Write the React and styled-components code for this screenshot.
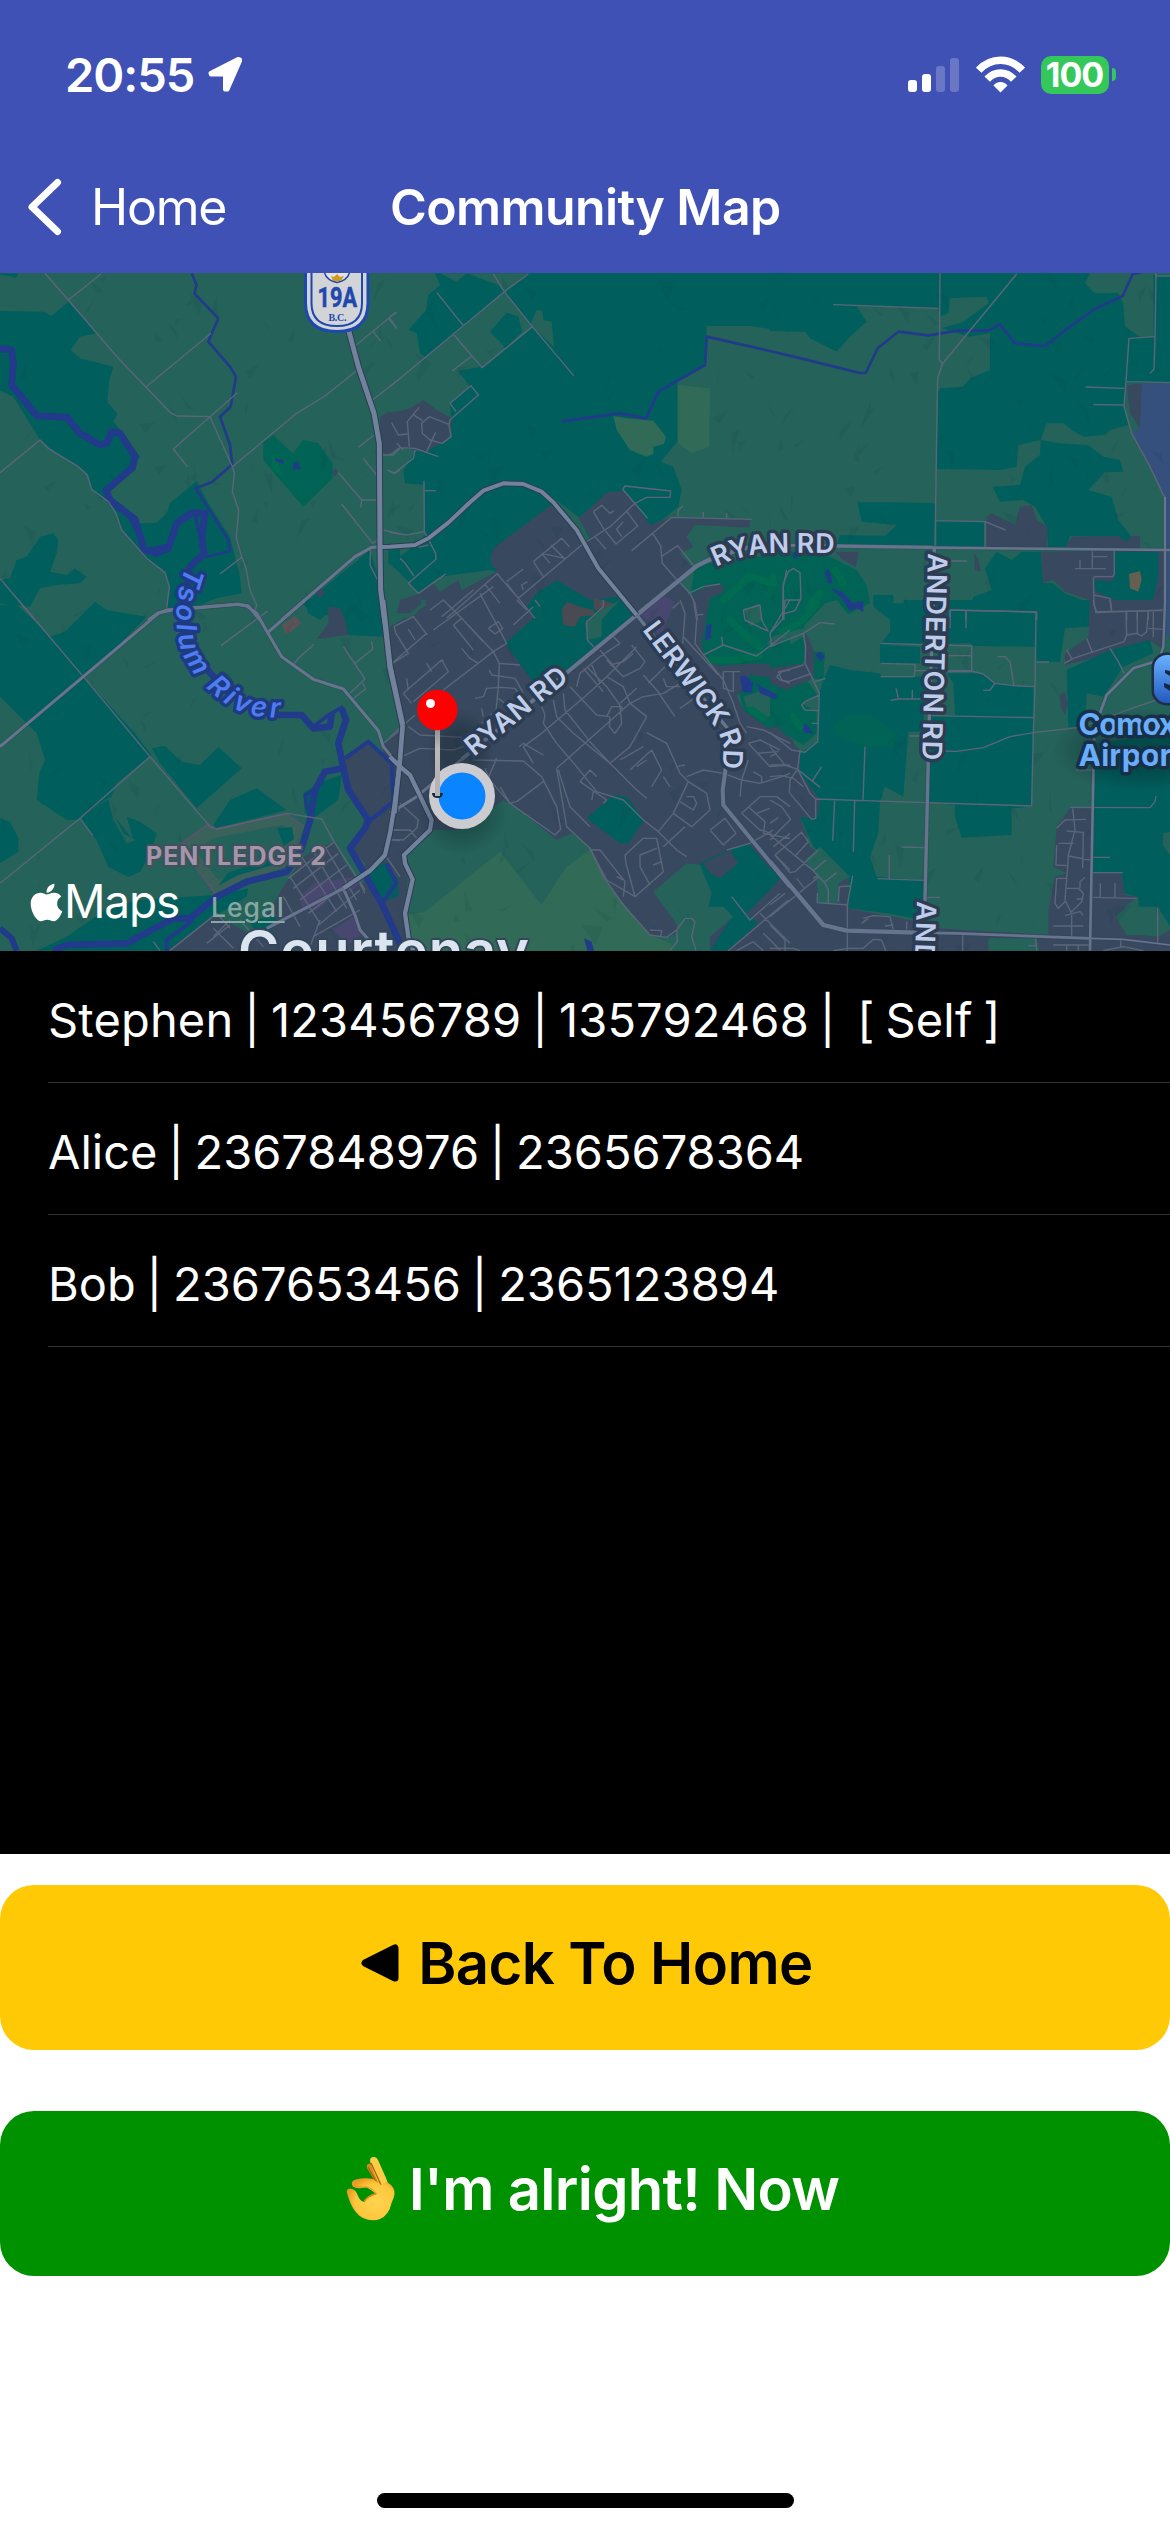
import React from "react";
import styled, { createGlobalStyle } from "styled-components";
import { FaApple } from "react-icons/fa";

const GlobalStyle = createGlobalStyle`
  *, *::before, *::after { box-sizing: border-box; }
  html, body { margin: 0; padding: 0; background: #fff; }
  body { font-family: Inter, "Liberation Sans", sans-serif; }
`;

const Screen = styled.main`
  width: 1170px;
  height: 2532px;
  display: flex;
  flex-direction: column;
  background: #fff;
  overflow: hidden;
`;

const Header = styled.header`
  height: 273px;
  flex: none;
  display: flex;
  flex-direction: column;
  background: #3f51b5;
  color: #fff;
`;

const StatusBar = styled.div`
  height: 141px;
  padding: 8px 54px 0 65px;
  display: flex;
  align-items: center;
  justify-content: space-between;
`;

const StatusGroup = styled.div`
  display: flex;
  align-items: center;
  gap: ${(p) => p.$gap}px;
`;

const Clock = styled.span`
  width: 129px;
  white-space: nowrap;
  font-size: 47px;
  line-height: 56px;
  font-weight: 600;
  letter-spacing: -1px;
`;

const Signal = styled.div`
  height: 34px;
  display: flex;
  align-items: flex-end;
  gap: 5px;
  margin-right: 17px;
`;

const SignalBar = styled.i`
  width: 9px;
  height: ${(p) => p.$h}px;
  border-radius: 3px;
  background: #fff;
  opacity: ${(p) => (p.$on ? 1 : 0.22)};
`;

const Battery = styled.div`
  display: flex;
  align-items: center;
  gap: 3px;
`;

const BatteryBody = styled.div`
  width: 68px;
  height: 38px;
  border-radius: 10px;
  background: #34c759;
  display: flex;
  align-items: center;
  justify-content: center;
  font-size: 34px;
  line-height: 38px;
  font-weight: 700;
  letter-spacing: -1px;
  padding-right: 1px;
`;

const BatteryNub = styled.i`
  width: 4px;
  height: 13px;
  border-radius: 0 5px 5px 0;
  background: #34c759;
`;

const NavBar = styled.nav`
  height: 132px;
  display: grid;
  grid-template-columns: 390px 1fr 390px;
  align-items: center;
`;

const BackLink = styled.div`
  display: flex;
  align-items: center;
  padding-left: 27px;
  gap: 27px;
  font-size: 50px;
  line-height: 60px;
  letter-spacing: -1.2px;
`;

const Title = styled.h1`
  margin: 0;
  font-size: 50px;
  line-height: 60px;
  font-weight: 600;
  letter-spacing: -0.6px;
  white-space: nowrap;
`;

const MapPane = styled.section`
  position: relative;
  height: 678px;
  flex: none;
  overflow: hidden;
  background: #25635a;
  svg { display: block; }
`;

const MapCredit = styled.div`
  position: absolute;
  left: 25px;
  bottom: 27px;
  display: flex;
  align-items: flex-end;
  color: #fff;
`;

const CreditName = styled.span`
  width: 147px;
  margin-left: -4px;
  font-size: 46px;
  line-height: 46px;
  letter-spacing: -1.2px;
`;

const LegalLink = styled.span`
  font-size: 26.5px;
  line-height: 34px;
  font-weight: 500;
  letter-spacing: 1px;
  color: #87a8a2;
  text-decoration: underline;
  text-decoration-thickness: 2px;
  text-underline-offset: 4px;
`;

const ContactList = styled.ul`
  margin: 0;
  padding: 0 0 0 48px;
  height: 903px;
  flex: none;
  list-style: none;
  background: #000;
  color: #fff;
`;

const Contact = styled.li`
  height: 132px;
  padding-top: 6px;
  display: flex;
  align-items: center;
  border-bottom: 1px solid #333335;
  font-size: 47px;
  line-height: 60px;
  letter-spacing: ${(p) => p.$track}px;
  word-spacing: -2.5px;
  white-space: pre;
`;

const Actions = styled.div`
  flex: 1;
  display: flex;
  flex-direction: column;
  gap: 61px;
  padding-top: 31px;
`;

const ActionButton = styled.button`
  height: 165px;
  flex: none;
  border: 0;
  border-radius: 34px;
  display: flex;
  align-items: center;
  justify-content: center;
  gap: ${(p) => p.$gap}px;
  padding: 0 0 10px ${(p) => p.$shift}px;
  background: ${(p) => p.$bg};
  color: ${(p) => p.$fg};
  font-family: inherit;
  font-size: 58px;
  line-height: 70px;
  font-weight: 600;
  letter-spacing: ${(p) => p.$track}px;
  white-space: nowrap;
`;

const HomeIndicator = styled.div`
  width: 417px;
  height: 15px;
  margin: 0 auto 24px;
  flex: none;
  border-radius: 8px;
  background: #000;
`;

/* ---------- map data: six sheets, three units to the pixel ---------- */

const SHEETS = {
  A: [0, 270], B: [390, 270], C: [770, 270],
  D: [0, 600], E: [390, 600], F: [770, 600],
};

const LAND = {
  field: "#25635a", forest: "#005f5d", urban: "#38495f", olive: "#316a57",
  golf: "#006355", bright: "#006b50", airport: "#35507c", purple: "#48476f",
  brown: "#4a4a53", red: "#5b5357", tan: "#655f52", water: "#213a8a",
};

const AREAS = [
  ["A", "forest", "M0 122L130 125L155 137L205 95L290 190L240 200L212 240L240 265L340 290L328 330L322 395L352 432L340 455L370 490L420 560L380 610L320 660L305 690L275 658L262 610L235 590L145 535L120 510L40 380L0 362Z"],
  ["A", "forest", "M305 675L320 665L380 730L420 760L470 758L500 730L510 700L590 633L625 700L690 800L720 920L725 970L650 985L600 1005L500 1015L508 950L495 908L440 870L365 780L348 730Z"],
  ["A", "forest", "M0 930L30 925L50 870L80 860L120 800L160 790L175 810L170 850L150 905L200 915L225 895L260 920L240 940L170 945L120 955L90 1010L40 1005L0 1000Z"],
  ["A", "forest", "M0 10L55 10L48 25L30 18L0 14Z"],
  ["D", "forest", "M0 15L45 10L90 50L150 110L195 95L285 5L320 30L440 50L300 190L250 230L300 285L405 400L455 465L350 550L330 600L345 650L400 720L380 650L420 665L470 700L450 760L420 815L385 830L325 800L290 720L240 660L200 660L110 600L118 520L135 480L110 400L60 350L0 290Z"],
  ["D", "field", "M240 655L330 590L345 650L370 700L410 722L380 740L300 735Z"],
  ["D", "forest", "M240 655L325 598L340 660L380 730L470 700L450 760L420 815L385 830L325 800L290 720Z"],
  ["D", "forest", "M0 655L30 665L55 715L55 755L0 790Z"],
  ["D", "forest", "M455 445L495 437L545 485L600 495L655 440L725 505L590 625L480 490Z"],
  ["D", "forest", "M640 675L690 600L770 565L860 630L650 685Z"],
  ["D", "forest", "M110 1052L200 1010L330 920L420 900L560 890L650 885L745 865L740 890L660 940L560 1052Z"],
  ["D", "forest", "M960 545L1025 525L1015 600L940 655L915 640L910 580Z"],
  ["D", "forest", "M815 685L870 680L880 705L850 735Z"],
  ["D", "forest", "M650 870L680 830L870 760L880 790L720 850Z"],
  ["A", "golf", "M790 515L820 495L878 550L910 510L955 520L998 580L998 625L910 710L845 635L790 570Z"],
  ["A", "bright", "M815 550L830 555L848 625L815 595Z"],
  ["A", "water", "M825 563L850 572L850 582L825 573Z"],
  ["A", "water", "M880 582L890 573L905 597L880 598Z"],
  ["A", "urban", "M1140 440L1165 425L1200 425L1200 530L1155 555L1142 530Z"],
  ["A", "urban", "M995 605L1005 595L1015 604L1005 620Z"],
  ["A", "forest", "M915 1000L1110 840L1140 940L1145 1050L1050 1050L1000 1010L960 1050L925 1030Z"],
  ["A", "forest", "M1165 840L1200 835L1200 905L1165 880Z"],
  ["A", "urban", "M945 965L965 955L975 970L960 985Z"],
  ["D", "forest", "M905 10L920 0L1145 0L1148 110L1040 105L1020 40L950 50Z"],
  ["D", "urban", "M985 20L1020 25L1035 60L1045 105L950 118L985 70Z"],
  ["D", "red", "M845 75L885 48L905 70L860 105Z"],
  ["B", "forest", "M135 10L150 45L115 75L108 120L55 180L80 190L90 250L105 262L192 193L245 258L270 290L205 303L240 350L180 400L182 440L185 500L155 520L75 545L40 600L45 640L102 645L105 795L70 830L0 880L60 940L85 970L150 920L300 900L500 960L750 900L780 780L865 710L875 660L850 590L812 575L862 515L862 335L945 285L950 168L1080 168L1200 185L1200 10Z"],
  ["B", "field", "M192 195L343 65L427 170L276 293Z"],
  ["B", "field", "M230 10L415 10L343 65L325 45Z"],
  ["B", "field", "M150 10L230 10L200 35Z"],
  ["B", "forest", "M300 185L350 128L385 140L397 185L345 235L330 215Z"],
  ["B", "field", "M420 165L440 120L457 122L460 150L485 155L492 230L427 172Z"],
  ["B", "field", "M490 683L570 745L600 810L580 810L540 740Z"],
  ["B", "olive", "M670 438L710 445L790 452L828 500L822 522L790 530L790 552L770 560L720 540L680 480Z"],
  ["B", "olive", "M865 345L960 355L958 530L905 550L865 520Z"],
  ["C", "forest", "M0 10L960 10L945 40L975 70L1045 68L1060 100L1065 170L1110 200L1150 200L1150 15L1200 15L1200 340L1070 340L1062 410L1075 465L1020 480L1005 495L940 500L905 480L880 460L830 460L812 510L745 525L740 590L690 600L500 597L503 365L510 355L580 350L600 325L660 300L660 190L600 200L515 175L580 155L655 100L650 80L540 85L535 130L508 140L505 115L260 108L290 155L240 200L200 245L120 205L105 185L0 183Z"],
  ["C", "forest", "M812 510L870 520L955 525L1000 560L1050 570L1060 605L1005 607L955 660L1025 680L1045 750L1085 800L1070 815L1045 800L900 798L890 832L835 832L830 770L795 710L760 690L690 695L668 650L750 645L765 590L810 555Z"],
  ["C", "forest", "M262 697L385 697L495 700L495 828L200 825L210 795L345 797L380 765L275 755Z"],
  ["C", "forest", "M500 752L645 755L645 830L500 830Z"],
  ["C", "urban", "M650 740L665 730L735 765L750 710L785 705L800 750L832 770L832 832L650 832Z"],
  ["C", "urban", "M885 832L905 800L1045 798L1070 815L1085 798L1110 798L1110 835Z"],
  ["C", "urban", "M1070 345L1116 340L1110 475L1080 430Z"],
  ["C", "airport", "M1116 340L1200 340L1200 1100L1188 1100L1186 685L1140 590L1086 485L1110 475Z"],
  ["C", "forest", "M310 975L370 975L370 1000L460 1000L470 1050L360 1050L310 1010Z"],
  ["C", "forest", "M680 845L725 870L755 845L812 845L820 940L850 940L885 970L960 1000L960 1050L590 1050L610 980L665 960L645 895Z"],
  ["C", "urban", "M812 845L1185 840L1185 1120L960 1100L958 990L885 965L850 930L820 940Z"],
  ["C", "forest", "M1035 845L1165 845L1165 920L1150 990L1060 1000L1000 975L975 960L975 930L1025 935L1035 920Z"],
  ["C", "tan", "M1077 912L1110 903L1115 930L1105 965L1080 955Z"],
  ["C", "urban", "M612 850L625 865L632 905L615 900Z"],
  ["B", "urban", "M0 430L60 415L100 390L140 420L185 445L182 500L155 520L105 545L20 530L0 555Z"],
  ["B", "urban", "M300 870L310 835L490 700L545 765L590 815L600 800L565 745L655 665L705 663L780 765L845 740L1080 748L1078 773L915 765L890 800L910 830L870 850L905 890L870 940L900 975L955 965L958 1000L935 1120L1010 1210L1060 1320L1210 1410L1210 2045L0 2045L0 1070L110 1005L85 975L130 940L150 965L205 930L215 960L320 905Z"],
  ["D", "urban", "M1150 430L1200 385L1200 1052L500 1052L650 945L745 1000L790 960L850 860L910 770L1000 725L1030 780L1090 870L1095 790L1050 750L1100 670L1040 560L1030 485L1105 420L1150 470Z"],
  ["D", "forest", "M745 960L830 950L820 985L770 1000Z"],
  ["D", "forest", "M1090 830L1155 785L1195 840L1195 890L1145 905Z"],
  ["D", "purple", "M900 890L940 850L1060 830L1090 850L1020 890L940 935L905 920Z"],
  ["D", "purple", "M1000 990L1060 950L1090 1000L1040 1035Z"],
  ["D", "urban", "M960 940L990 880L1010 870L1030 900Z"],
  ["E", "field", "M0 240L35 380L0 405Z"],
  ["E", "field", "M0 0L110 0L70 50L0 60Z"],
  ["E", "urban", "M30 0L90 -20L95 10L60 40L20 40Z"],
  ["E", "field", "M45 950L55 800L40 770L125 690L210 690L340 600L400 640L500 720L545 700L600 740L640 830L700 920L780 1005L830 1015L860 1000L880 960L885 1052L60 1052Z"],
  ["E", "olive", "M45 945L105 935L330 755L455 915L530 800L600 750L650 850L780 1005L840 1030L860 1052L60 1052Z"],
  ["E", "water", "M582 1015L605 1025L612 1052L592 1052Z"],
  ["E", "forest", "M345 130L435 50L410 20L440 -20L500 -60L600 0L680 -10L740 45L525 215L425 240Z"],
  ["E", "brown", "M515 30L530 5L570 20L612 30L612 45L570 50L555 80L520 75Z"],
  ["E", "brown", "M610 -5L655 5L680 15L640 35L612 28Z"],
  ["E", "field", "M585 70L635 30L690 0L665 25L635 60L635 110L595 120Z"],
  ["E", "purple", "M745 40L820 -15L855 5L840 40L810 110L780 65Z"],
  ["E", "forest", "M590 655L670 585L710 590L762 660L715 730L690 730Z"],
  ["E", "forest", "M930 790L1025 745L1075 730L1170 840L1070 940L1105 970L1010 1052L960 1052L1025 950L955 920Z"],
  ["E", "field", "M790 875L890 790L930 795L965 880L955 920L1000 920L1030 950L960 1010L960 1052L840 1052L860 1000L862 975Z"],
  ["E", "urban", "M940 790L1020 750L1045 790L990 835L960 820Z"],
  ["B", "golf", "M915 890L1000 870L1200 850L1200 1400L1170 1400L1060 1320L1045 1260L1010 1200L960 1170L940 1150L935 1120L960 985L900 975Z"],
  ["B", "urban", "M900 975L960 945L1000 945L1000 968L958 985L935 1110L900 1080Z"],
  ["E", "urban", "M960 205L1010 195L1100 190L1200 195L1200 250L1130 230L1080 225L1050 280L1020 300Z"],
  ["E", "field", "M1060 290L1120 270L1180 340L1130 350L1070 320Z"],
  ["E", "field", "M1130 130L1200 60L1200 110L1150 140Z"],
  ["E", "field", "M1062 30L1105 10L1120 60L1080 80Z"],
  ["C", "golf", "M0 845L150 845L260 900L290 945L300 1000L200 1050L0 1100Z"],
  ["C", "urban", "M195 845L265 845L258 892L220 870Z"],
  ["C", "field", "M165 1000L200 990L240 1040L280 1030L300 1050L130 1100L100 1070Z"],
  ["F", "forest", "M160 240L180 195L240 210L330 220L335 230L465 230L460 395L415 395L400 590L345 560L330 605L325 700L300 770L320 830L460 840L460 960L350 940L235 925L235 830L130 740L90 650L140 655L150 600L90 520L90 460L140 430L148 280Z"],
  ["F", "forest", "M360 60L410 45L400 0L960 0L958 80L885 85L870 185L800 185L797 140L610 138L600 130L330 135L360 95Z"],
  ["F", "forest", "M330 135L450 140L450 190L330 190Z"],
  ["F", "forest", "M530 220L640 220L680 250L730 255L790 258L792 395L785 620L555 615L475 605L480 350L555 345L550 250Z"],
  ["F", "forest", "M555 615L785 620L725 625L725 705L575 713L555 650Z"],
  ["F", "urban", "M960 0L1180 0L1180 150L1140 120L1030 160L885 195L885 160L955 110Z"],
  ["F", "forest", "M890 210L1020 150L1140 120L1150 160L1060 200L1000 290L950 280L945 380L895 380Z"],
  ["F", "forest", "M975 430L1200 400L1200 980L1165 920L1105 920L1105 890L1060 880L1055 820L968 820Z"],
  ["F", "field", "M1180 700L1200 695L1200 765L1178 735Z"],
  ["F", "urban", "M870 285L885 275L893 310L885 345L872 320Z"],
  ["F", "urban", "M900 625L968 625L968 820L1055 820L1065 885L1105 890L1065 920L1070 1000L1165 1010L1200 990L1200 1052L505 1052L505 985L835 1005L835 930L855 830L890 820L850 800L860 680Z"],
  ["F", "field", "M1037 950L1070 920L1165 925L1165 1005L1070 1005Z"],
  ["F", "field", "M655 1015L800 1015L808 1052L655 1052Z"],
  ["F", "urban", "M0 380L30 380L70 430L90 450L90 520L150 600L140 655L90 650L120 740L235 830L235 925L420 960L505 985L505 1052L0 1052Z"],
  ["F", "field", "M105 780L150 740L240 830L205 850L205 910L145 910L140 830Z"],
  ["F", "forest", "M0 800L32 835L0 870Z"],
  ["F", "golf", "M0 170L100 110L105 180L60 235L110 240L145 290L95 310L140 335L140 400L100 435L40 400L0 350Z"],
  ["F", "urban", "M0 205L100 190L130 235L50 270L0 250Z"],
  ["F", "urban", "M105 95L132 150L132 235L105 190Z"],
  ["F", "golf", "M132 155L165 155L160 240L132 235Z"],
  ["F", "golf", "M190 380L230 345L300 345L380 400L370 440L290 440L200 410Z"],
  ["C", "water", "M163 905L175 898L187 940L175 940Z"],
  ["C", "water", "M182 955L215 965L250 1000L280 992L280 1027L262 1015L240 1022L215 985Z"],
  ["C", "water", "M70 850L82 845L82 865L68 862Z"],
  ["E", "water", "M950 75L965 72L962 115L945 122Z"],
  ["E", "water", "M1050 230L1065 225L1090 250L1085 278L1058 275Z"],
  ["E", "water", "M1102 252L1160 285L1155 297L1110 280Z"],
  ["F", "water", "M138 165L150 155L163 170L150 185Z"],
  ["F", "water", "M92 375L110 373L130 400L105 398Z"],
  ["F", "water", "M0 275L22 288L15 298L0 292Z"],
];

const FAIRWAYS = [
  ["E", "M1020 60L1060 100L1110 140"], ["E", "M960 180L1040 180L1110 165"],
  ["E", "M1085 330L1120 355"], ["B", "M1000 990L1080 920L1150 940"],
  ["C", "M10 920L0 970"], ["C", "M150 970L120 1015"], ["F", "M140 10L100 60L40 95"],
  ["F", "M130 0L115 30"], ["F", "M70 350L90 380"], ["C", "M195 900L220 940"],
];

const RIVERS = [
  ["A", 21, "M0 236L35 240L40 280L35 345L110 437L200 442L240 490L300 525L322 518L335 485L360 490L405 560L398 592L318 662L330 690L405 748L432 838L470 850L505 835L530 760L575 728L615 730L605 800L612 850L570 890L560 960"],
  ["A", 9, "M385 735L425 815L440 840L500 825M583 725L600 800"],
  ["D", 20, "M555 -30L545 60L590 170L640 230L720 300L830 345L905 345L940 385L990 380L995 340"],
  ["D", 11, "M940 380L985 345L1030 320"],
  ["D", 20, "M1025 325L1038 360L1015 430L1030 505L1045 570L1105 660L1095 685L1050 745L1150 920L1195 1020L1210 1052"],
  ["D", 20, "M1030 505L975 515L945 570L930 660L905 745L860 815L740 845L650 890L570 955L520 955L380 1030L200 1035L160 1052"],
  ["D", 10, "M945 570L915 585L920 620L935 640"],
  ["D", 12, "M1035 475L1105 425L1175 490L1180 605L1100 670M1160 790L1188 850L1150 905M500 1052L500 1020L580 960"],
  ["D", 18, "M0 985L35 1015L50 1052"],
  ["A", 8, "M575 10L590 45L583 70L655 145L625 215L690 290L708 320L692 410L660 440L690 525L697 583L635 637L587 655L685 810L690 843L615 862"],
  ["B", 8, "M515 454L690 430L768 445L805 365L945 285L950 200L1140 243"],
  ["C", 8, "M0 243L80 262L270 309L287 309L323 235L385 185L475 196L565 182L655 182L690 163L735 220L825 228L900 170L975 117L1058 78L1088 12L1112 8"],
];

const LANES = [
  ["A", "M135 10L205 90L355 265L510 427L530 438L630 440L697 590M205 90L303 12M435 353L633 190M630 440L712 368M630 440L520 537L562 590M697 590L890 430L975 378L1070 302M697 590L703 610L697 665L716 720L709 805L725 860L738 895L750 960L770 1005L760 1040M660 912L725 862M0 608L120 510L145 535L235 590L262 615L275 658L325 695L348 730L365 780L440 865L495 908L508 950L500 1015M1065 228L1188 127M1118 183L1142 213M1165 145L1190 175M1118 390L1200 325M1075 532L1122 495M1090 565L1132 618M1015 608L1085 690L1132 690M1085 690L1082 712M1025 702L1118 820L1135 808M1112 835L1110 885L1138 940M1150 780L1200 792M1145 555L1180 555L1200 535M1162 600L1185 610L1200 598M0 925L105 1050"],
  ["D", "M55 0L250 230L450 470L630 680L650 688L860 640L965 657L1002 725L1095 870M450 470L240 655L0 850M240 655L278 707M663 137L803 33M880 195L895 175L942 133M1030 140L1095 237L1050 280M1065 190L1118 147L1115 125M1060 295L1097 267L1088 250M1150 430L1200 390M1180 640L1200 630M1170 690L1200 690M1170 720L1200 722M1155 765L1200 830"],
  ["D", "M510 1052L650 940L690 985M865 835L1000 728M880 865L1015 760M900 900L1040 795M925 940L1060 835M950 980L1080 870M870 830L960 970M905 770L1010 935M940 755L1040 925M975 740L1070 900M850 890L900 980M640 985L700 1045M690 960L640 1010M620 1030L690 975M720 960L790 1040M940 1010L1080 930M960 960L930 1040M1080 850L1095 880M460 1025L480 1052"],
  ["B", "M0 350L343 65L415 12M310 12L343 65L427 170L551 317M140 67L220 167M192 195L276 293L427 170M245 258L187 303M180 400L243 347L265 375L180 450L177 465L183 500L157 520L120 510L97 490L95 460L118 440L177 463M198 425L180 400M87 412L52 455L58 530M5 458L25 495L52 492M68 433L98 452M137 487L110 545M0 555L30 533L75 535L145 560M20 520L40 540M75 540L70 565L12 610L0 605M102 632L103 785L50 795L0 787M105 662L137 662M103 785L137 850L138 868L55 940L85 970L167 912M30 865L45 880L72 918M85 832L115 825M0 140L20 127M0 145L20 175"],
  ["B", "M385 985L575 825L660 770L735 700L770 682L840 682L842 663L705 648L698 658L773 745M610 725L635 706L660 730L672 722M610 725L640 775L678 822L743 768L708 722M700 755L680 778L695 800M615 800L648 838M455 850L525 865M430 875L515 805L538 830M430 875L460 920M455 850L480 880M483 825L525 868M350 935L400 897M400 960L395 945L412 935M320 910L385 985L435 1045M350 940L385 985M170 1045L320 912M285 943L330 1000M725 842L788 790L845 742L1085 748M863 738L865 720L878 708M940 725V742M1010 730V745M788 790L812 828L817 880L868 938M817 858L863 827L912 888M870 938L900 970L915 1000L922 1050M895 970L940 950L990 942M920 1035L940 1033M848 1015L868 997M1190 900L1180 950L1182 1050"],
  ["E", "M120 30L160 0L215 55L310 155L328 190L325 260L318 330L275 370M190 75L215 55L280 125M190 75L250 150M215 145L240 175L265 190M40 280L155 180L175 215L70 305M40 280L65 310M12 80L70 50L112 105M12 80L18 100L55 160L0 195M55 88L75 120M110 100L0 195M130 90L310 -40M155 50L250 -30M270 -20L350 130L310 155M295 85L325 65L338 85L315 102L295 85M160 180L150 185M110 190L125 215M50 235L55 270M160 270L310 155M325 190L390 195M298 210L305 225L375 235L400 280M255 295L280 290L290 265L330 262L375 265L410 320M325 295L350 315M275 325L280 350M0 410L75 345M55 380L90 405L220 412M35 470L90 445L190 450L250 430"],
  ["E", "M400 440L455 400L590 285L650 230L740 140M250 480L400 483L455 530L500 620L512 688L495 705L360 610L300 540L285 505M320 475L290 545M330 560L360 610M355 610L380 605L460 545M400 440L430 490M388 440L400 430L460 465M500 505L720 310L760 290L820 280L920 220M455 320L465 345L460 370L500 430L560 500L620 575L700 600L760 660L805 695L850 640L895 545L870 520L830 430L770 398M490 300L500 350L550 400L660 490L740 570L770 595M520 280L525 330L600 425L660 490L720 440L770 350L720 310L700 260L650 230M540 260L620 345L658 350M590 200L650 260L700 330M560 260L570 220L630 170L690 130M580 205L640 275M605 195L630 250M650 180L700 230L750 205L765 185L725 135M660 195L700 185L730 160M630 150L690 220M650 350L665 320L690 320L695 370L675 400L658 380L660 350M740 265L690 310M775 250L825 200M820 235L830 260L880 260M760 225L800 270L855 350M870 325L920 290M505 510L540 620L600 680M500 505L530 680L600 745L650 840L735 890L820 815L800 715L760 715L705 765L708 790L735 890M800 745L750 765L750 800L780 855M790 795L815 785M570 545L600 510L620 530M570 545L650 600L640 610M610 575L605 600"],
  ["E", "M805 695L860 750L890 770M850 640L905 680L960 630L950 580L895 545M870 605L910 630L920 610L910 590L890 590M720 510L785 450L815 510L785 560M740 500L770 480M820 530L840 560M690 480L760 440M890 530L940 510L1000 520L1055 540L1110 550L1175 530L1200 520M860 500L885 495M1050 590L1055 540L1075 480M1070 380L1120 390L1200 430M1075 430L1140 500L1200 495M1075 430L1110 420L1170 450M1100 460L1165 455M1090 515L1115 530L1115 550M1055 640L1110 590L1160 590L1200 620M1075 620L1125 665L1120 700L1200 715M1055 640L1110 690L1145 700M1100 640L1140 625M1150 740L1200 700M1155 765L1200 810M1010 750L1080 730L1150 690M960 690L1005 655L1038 700L1000 735L960 690M820 740L885 680M700 840L680 830M600 750L630 750L705 845L700 890M600 745L640 830L700 915L780 1005L830 1012L860 990L885 955L905 955L915 965L905 1010L918 1052M780 990L815 992L812 1010M860 990L862 1025L840 1052M1015 1052L1195 900M1025 890L1080 960L1170 880M1110 940L1200 1030M1040 1052L1090 1025L1120 1052M1120 1000L1170 1050"],
  ["E", "M870 0L885 40L878 130M910 0L920 60L915 130L940 165L1000 240L1030 310L1050 370L1070 400M880 110L985 225M940 165L1000 135L1100 168L1150 130L1200 90M1000 215L1050 215M1000 215V265L1030 275L1030 215M995 110L998 135M1060 30L1110 15L1115 60L1135 95M1060 30L1065 60L1130 92M1145 140L1140 100L1200 0M1165 215L1200 210M1165 215L1175 240L1200 250M640 0L640 20L590 65L592 120L620 150M670 110L690 130M435 0L450 20M370 75L430 20M380 0L410 30M0 640L20 635M5 690L60 690L80 715M30 610L85 660L80 685L40 720L0 718"],
  ["C", "M510 10L508 270L517 282L503 325L500 500L495 828M190 104L505 115M740 12L517 282M1158 10L1155 200L1152 298L1140 310M1155 200L1077 205L1068 335L1200 338M1068 335L1062 410L1085 490L1140 590L1185 685L1185 835M947 351L1062 355M970 404L1060 405M1155 18L1200 18M497 752L645 755L645 832M645 755L707 780M530 873L590 873M540 1020L800 1026L800 1050M540 1020V1050M588 1020V1050M915 896L1008 896M930 870V896M967 843V893M967 860L1012 860M1033 843V912L1028 920H975L970 925L972 1005L980 1025L1180 1022M972 975L1020 985L1025 1020M1070 1022V1050M1102 1022V1050M1135 1022V1050M38 1050L40 940L55 905L70 895L90 908L93 985L75 1022L38 1032"],
  ["F", "M540 30L798 36L795 260L790 395L785 615M540 30V85M588 30V85M332 130L605 138V215L530 215M530 167L603 167M332 190L435 193V212L432 230L332 230M435 212H600L640 222L675 250L730 257L795 260M640 271L660 270L675 250M683 170L705 170L720 185L732 257M800 186H837M362 301L385 297L455 297M378 265L385 295M427 270V295M485 347L790 353M520 453L560 454L640 443L720 410L790 398L930 382L1100 320L1160 300M420 408H460M285 440L279 600M137 597L280 602L470 608L787 618M194 600L188 722M254 602L250 755M137 597V655L125 658L60 580M395 741L465 743M358 765V838M323 836L465 841M465 892H510M0 140L100 100L150 68L195 72M0 100L40 55L45 0M45 0L90 0M100 100L107 140L105 190L120 220L148 280L143 425L105 457L65 450L0 398M148 285L105 305L95 315L105 330L145 332M125 370L145 370M90 450L83 508L150 562M83 508L60 540L58 580M155 500L127 543M135 245L167 235M20 230L35 215L100 195M20 230L30 240L55 245L120 222"],
  ["F", "M0 440L45 495L83 508L120 580L137 597M0 470L20 460M0 495L45 495M0 530L35 527L70 535L100 560M0 600L35 620L62 658L0 720M0 670L25 652M15 765L95 697L115 725L75 768M15 765L60 818L75 815L145 750M0 705L130 812L168 780M130 812L165 850L175 870V908M130 835L145 825M200 818L165 845M0 950L145 832M80 835L102 863M0 915L45 880M142 880V908L232 915V1052M248 827L232 915M205 905L208 860L240 858M0 975L45 1020V1052M280 955L310 947L360 950L370 990M275 970L295 955M345 978L370 975M190 1052L235 1045L280 1045L310 1018L335 1020L347 1052M0 1045H70L90 1052M578 1005V1052M410 965V995M883 190L910 175L1062 125L1070 105L1068 35M970 0L978 38L1180 30M1020 0L1025 35M1070 105L1100 100L1115 108L1130 95L1135 35M1102 35V100M1150 35V112M1135 85L1180 88M950 115L968 160M890 150L905 175M1020 145L1045 185L1062 220M917 510L968 510M900 622L1140 623L1155 605L1158 588M908 625L915 690L895 765L893 800L885 900L905 940L905 1010M860 685L885 660L948 658M890 693L940 697L938 805M865 730L910 730M860 735L858 795L893 797M895 768L960 780M968 772H1020M968 818H1058M968 892L1100 895M991 850V892M1035 850V892M890 835H860L855 910L865 925L885 905M890 865H925L940 880L935 905L905 935M930 865L930 845L945 832M920 897L940 897M885 947L930 935L940 947M850 978H940M1163 925V1030M850 1035L960 1035M890 1035V1052M925 1035V1052M1000 1052L1060 1040L1120 1052M1052 1017V1040M797 1015L800 1052M775 1037H800"],
];

const ROADS = [
  ["A", 9, "M1200 830L1115 832L1065 860L845 1050M445 1050L475 1028L520 1020L715 1003L745 1008L780 1050"],
  ["D", 9, "M0 440L250 230L475 40L500 30L710 13L740 18L770 40L803 98L845 170L940 238L1030 267L1135 392L1150 440L1195 495M915 0L803 98"],
  ["D", 9, "M1030 865L1065 945L1080 990L1120 1035M1030 865L800 985"],
  ["E", 9, "M0 640L80 590L215 478"],
  ["E", 12, "M215 478L740 45"],
  ["B", 13, "M740 1035L920 888L960 868L1060 835L1140 826L1200 826"],
  ["C", 9, "M50 826L200 828"],
  ["C", 10, "M200 828L490 832"],
  ["C", 8, "M490 833L1200 840"],
  ["C", 10, "M493 832L490 990"],
  ["F", 10, "M490 0L478 350L465 900L440 1000"],
  ["E", 10, "M740 45L700 0M740 45L1000 370L1025 400"],
  ["E", 12, "M1010 480L1005 520L998 570L1000 615L1200 860"],
  ["F", 13, "M0 785L160 975L230 992L440 998"],
  ["F", 8, "M440 998L560 1000L960 1015"],
  ["F", 5, "M960 1015L1060 1018L1200 1035"],
  ["F", 8, "M972 420L960 1052M1170 180L1090 205L1010 285L975 380L972 430"],
  ["F", 7, "M1185 -310V0L1180 140L1165 185"],
];

const HIGHWAYS = [
  ["A", 15, "M1047 185L1075 290L1122 430L1138 520L1140 830L1142 960L1155 1060"],
  ["D", 16, "M1148 0L1170 200L1208 375"],
  ["E", 14, "M38 375L30 480L13 640"],
  ["D", 13, "M1200 480L1183 620L1170 700L1155 765L1110 812L1030 865"],
  ["E", 13, "M0 470L30 500L60 525L125 660L120 690L42 765L45 790L68 838L45 940L55 1010L70 1052"],
  ["B", 12, "M-30 831L0 830L75 825L115 805L175 758L240 697L280 662L340 640L400 642L455 665L490 697L560 780L625 895L740 1035"],
];

/* Faint hill shading: a seeded scatter of small facets. */
const FACETS = (() => {
  let seed = 19;
  const next = () => {
    seed = (seed * 16807) % 2147483647;
    return seed / 2147483647;
  };
  return Array.from({ length: 420 }, () => {
    const x = next() * 1170;
    const y = 273 + next() * 678;
    const a = next() * 30 - 15;
    const b = 6 + next() * 18;
    return `M${x.toFixed(1)} ${y.toFixed(1)}l${a.toFixed(1)} ${b.toFixed(1)}l${(next() * 14 - 7).toFixed(1)} ${(-b * next()).toFixed(1)}z`;
  });
})();

const at = (sheet) => {
  const [x, y] = SHEETS[sheet];
  return `translate(${x} ${y}) scale(0.33333)`;
};

const Strokes = ({ items, color, casing }) => (
  <g fill="none" strokeLinejoin="round">
    {casing && items.map(([s, w, d], i) => (
      <path key={`c${i}`} transform={at(s)} d={d} stroke={casing} strokeWidth={w + 6} />
    ))}
    {items.map(([s, w, d], i) => (
      <path key={i} transform={at(s)} d={d} stroke={color} strokeWidth={w} />
    ))}
  </g>
);

const LABEL_PATHS = {
  ryanTop: "M716 567Q738 556 762 553.500Q790 552 850 553.500",
  ryanMid: "M474 757L574 676",
  lerwick: "M642 630L707 716Q722.500 737 723.500 748L721 810",
  anderton: "M928 553L922 765",
  andertonLow: "M917 901L909 1110",
  tsolum: "M186 566Q170 610 180.500 648Q192 680 226 704Q256 725 310 713",
};

const RoadLabel = ({ on, children, length, ...rest }) => (
  <text
    fontFamily="Inter, 'Liberation Sans', sans-serif" fontSize="27" fontWeight="600" fill="#bfcdea"
    stroke="#2c3c53" strokeWidth="7" strokeLinejoin="round" paintOrder="stroke" {...rest}
  >
    <textPath href={`#${on}`} textLength={length}>{children}</textPath>
  </text>
);

const MapDrawing = () => (
  <svg width="1170" height="678" viewBox="0 273 1170 678">
    <defs>
      {Object.entries(LABEL_PATHS).map(([id, d]) => <path key={id} id={id} d={d} />)}
      <linearGradient id="poi" x1="0" y1="0" x2="0" y2="1">
        <stop offset="0" stopColor="#69b1ff" /><stop offset="1" stopColor="#2359be" />
      </linearGradient>
      <linearGradient id="stick" x1="0" y1="0" x2="0" y2="1">
        <stop offset="0" stopColor="#8f8f90" /><stop offset="0.300" stopColor="#b9b7b7" /><stop offset="1" stopColor="#b3b1b2" />
      </linearGradient>
      <radialGradient id="shade">
        <stop offset="0.500" stopColor="#0a1a20" stopOpacity="0.500" /><stop offset="1" stopColor="#0a1a20" stopOpacity="0" />
      </radialGradient>
    </defs>
    <rect y="273" width="1170" height="678" fill={LAND.field} />
    {AREAS.map(([s, kind, d], i) => (
      <path key={i} transform={at(s)} d={d} fill={LAND[kind]} />
    ))}
    <g fill="none" stroke={LAND.bright} strokeWidth="22" strokeLinecap="round">
      {FAIRWAYS.map(([s, d], i) => <path key={i} transform={at(s)} d={d} />)}
    </g>
    <g fill="#0b2f38" opacity="0.080">
      {FACETS.map((d, i) => <path key={i} d={d} />)}
    </g>
    <path d="M209 822L180 843L215 894L290 865L304 826L286 814L215 829Z" fill="#3b615b" />
    <path d="M214 838L195 850L218 880L278 856L290 832L282 825Z" fill="#23625a" />
    <path d="M277 828l15 -1l2 12l-10 7zM218 886l10-13l55-20l5 8l-50 14z" fill="#005f5d" />
    <path d="M304 826L286 814L215 829L209 824L180 845L216 895" fill="none" stroke="#5c5270" strokeWidth="1.500" />
    <Strokes items={RIVERS} color={LAND.water} />
    <g fill="none" stroke="#5b6579" strokeWidth="4.200" strokeLinejoin="round">
      {LANES.map(([s, d], i) => <path key={i} transform={at(s)} d={d} />)}
    </g>
    <Strokes items={ROADS} color="#67748d" casing="#33465a55" />
    <Strokes items={HIGHWAYS} color="#72829d" casing="#2b3d50" />

    <g>
      <path d="M304 260H369.500V303Q369.500 333 337 333Q304 333 304 303Z" fill="#1d49ad" />
      <path d="M307 260H366.500V303Q366.500 330 337 330Q307 330 307 303Z" fill="#d3d4d7" />
      <path d="M310.500 260H363V303Q363 327 337 327Q310.500 327 310.500 303Z" fill="#1d49ad" />
      <path d="M312.500 260H361V303Q361 325 337 325Q312.500 325 312.500 303Z" fill="#d3d4d7" />
      <path d="M324 270H350Q349 280 337 282.500Q325 280 324 270Z" fill="#e2e2e2" stroke="#1d49ad" strokeWidth="1.500" />
      <path d="M331 276l2 5h8l3-5-4 1-3-3-3 3z" fill="#cf9a1d" />
      <text x="317.500" y="306.500" textLength="39.500" lengthAdjust="spacingAndGlyphs" fontFamily="Roboto, 'Liberation Sans', sans-serif" fontWeight="700" fontSize="28.500" fill="#1d49ad" stroke="#1d49ad" strokeWidth="0.600">19A</text>
      <text x="328.500" y="321" textLength="18" fontFamily="'Liberation Serif', serif" fontWeight="700" fontSize="10" fill="#1d49ad">B.C.</text>
    </g>

    <RoadLabel on="ryanTop" length="121">RYAN RD</RoadLabel>
    <RoadLabel on="lerwick" length="165">LERWICK RD</RoadLabel>
    <RoadLabel on="anderton" length="207">ANDERTON RD</RoadLabel>
    <RoadLabel on="andertonLow" length="207">ANDERTON RD</RoadLabel>
    <RoadLabel on="tsolum" length="214" fontStyle="italic" fontSize="27.500" fill="#507cf2" stroke="#1e3b82">Tsolum River</RoadLabel>

    <g fontFamily="Inter, 'Liberation Sans', sans-serif" paintOrder="stroke" strokeLinejoin="round">
      <text x="146" y="865" textLength="180" fontSize="25" fontWeight="700" fill="#a595aa" stroke="#41505d" strokeWidth="4">PENTLEDGE 2</text>
      <text x="238" y="971" textLength="291" fontSize="56" fontWeight="600" fill="#dbe5f0" stroke="#33465a" strokeWidth="4">Courtenay</text>
      <ellipse cx="1140" cy="750" rx="90" ry="42" fill="url(#shade)" opacity="0.600" />
      <g fontSize="30.500" fontWeight="700" fill="#69adfb" stroke="#173048" strokeWidth="7">
        <text x="1078.500" y="735" textLength="98">Comox</text>
        <text x="1078.500" y="766" textLength="105">Airport</text>
      </g>
    </g>
    <rect x="1151.500" y="652.500" width="53" height="53" rx="15" fill="#1f2f4a" />
    <rect x="1154" y="655" width="48" height="48" rx="13" fill="url(#poi)" />
    <path d="M1165 670l5 1v5l-5-3zM1164 683l6 2v6l-6-4z" fill="#14284a" />

    <circle cx="462" cy="810" r="46" fill="url(#shade)" opacity="0.500" />
    <ellipse cx="460" cy="750" rx="34" ry="42" fill="url(#shade)" opacity="0.600" />
    <RoadLabel on="ryanMid" length="123">RYAN RD</RoadLabel>
    <circle cx="462" cy="796" r="33" fill="#cccbd0" />
    <circle cx="462" cy="796" r="23.500" fill="#0a84ff" />
    <path d="M432 793h4v3h3v-3h4q0 5 -5.500 5t-5.500-5z" fill="#1d2a35" />
    <rect x="435" y="728" width="5" height="68" fill="url(#stick)" />
    <circle cx="437.300" cy="710" r="20.200" fill="#ff0000" />
    <circle cx="430.500" cy="703.500" r="4.500" fill="#fff" />
  </svg>
);

/* ---------- glyphs ---------- */

const LocationArrow = () => (
  <svg width="36" height="37" viewBox="0 0 36 37">
    <path d="M3.500 17L31 3L33 3.500L33 5L20.500 33.500L18 33.500V20.500Q18 18.500 16 18.500H4Z" fill="#fff" stroke="#fff" strokeWidth="4" strokeLinejoin="round" />
  </svg>
);

const Wifi = () => (
  <svg width="49" height="37" viewBox="0 0 49 37">
    <g fill="none" stroke="#fff" strokeWidth="7.600">
      <path d="M2.700 14.200Q12 4.300 24.500 4.300Q37 4.300 46.300 14.200" />
      <path d="M11.200 23.200Q17 17 24.500 17Q32 17 37.800 23.200" />
    </g>
    <path d="M24.500 36.500L17.500 29.500Q20 26 24.500 26T31.500 29.500Z" fill="#fff" />
  </svg>
);

const Chevron = () => (
  <svg width="37" height="60" viewBox="0 0 37 60">
    <path d="M30.500 5.500L5 30L30.500 54.500" fill="none" stroke="#fff" strokeWidth="7" strokeLinecap="round" strokeLinejoin="round" />
  </svg>
);

const Triangle = () => (
  <svg width="38" height="38" viewBox="0 0 38 38">
    <path d="M4 19L34 4V34Z" fill="#000" stroke="#000" strokeWidth="7" strokeLinejoin="round" />
  </svg>
);

const OkHand = () => (
  <svg width="50" height="66" viewBox="0 0 50 66">
    <defs>
      <radialGradient id="skin" cx="0.600" cy="0.560" r="0.600">
        <stop offset="0" stopColor="#ffd34f" /><stop offset="0.700" stopColor="#ffc83d" /><stop offset="1" stopColor="#ed9b22" />
      </radialGradient>
    </defs>
    <path d="M21 12Q20 8 23.500 7.500L27 10L37 30L34 34Z" fill="#d98a1f" />
    <path d="M24 5Q24 0.500 28.500 1Q31 1.500 32 4L40 22Q42 27 43.500 33L35 33L28 17Z" fill="#ffcc48" />
    <path d="M31 27.500L22 11M35 29L25 7" fill="none" stroke="#a9670f" strokeWidth="1.400" />
    <path d="M6.500 30Q4 25 10 23.500Q19 21.500 27 23L35 29L41 26Q49 31 48.500 38Q48 42 45.500 47Q43 59 34 63Q26 66 17 62Q9 58 4 46Q1 38 0.800 35Q2 31.500 6 33Q10 34 12 40Q14 45 18 46Q21 41 30 38Q26 34 20 31Q11 34 6.500 30Z" fill="url(#skin)" />
    <path d="M18 46Q21 40 30.500 37.500" fill="none" stroke="#d88a1c" strokeWidth="1.500" />
    <path d="M7 30Q14 31.500 21 31Q27 33 30 37.500" fill="none" stroke="#e29c28" strokeWidth="1.300" />
  </svg>
);

const CONTACTS = [
  { text: "Stephen | 123456789 | 135792468 |  [ Self ]", track: 0.16 },
  { text: "Alice | 2367848976 | 2365678364", track: 0 },
  { text: "Bob | 2367653456 | 2365123894", track: 0.04 },
];

const SIGNAL = [[12, true], [18, true], [26, false], [34, false]];

export default function App() {
  return (
    <Screen>
      <GlobalStyle />
      <Header>
        <StatusBar>
          <StatusGroup $gap={13}>
            <Clock>20:55</Clock>
            <LocationArrow />
          </StatusGroup>
          <StatusGroup $gap={0}>
            <Signal>
              {SIGNAL.map(([h, on]) => <SignalBar key={h} $h={h} $on={on} />)}
            </Signal>
            <StatusGroup $gap={16}>
              <Wifi />
              <Battery>
                <BatteryBody>100</BatteryBody>
                <BatteryNub />
              </Battery>
            </StatusGroup>
          </StatusGroup>
        </StatusBar>
        <NavBar>
          <BackLink><Chevron />Home</BackLink>
          <Title>Community Map</Title>
        </NavBar>
      </Header>
      <MapPane>
        <MapDrawing />
        <MapCredit>
          <FaApple size={43} />
          <CreditName>Maps</CreditName>
          <LegalLink>Legal</LegalLink>
        </MapCredit>
      </MapPane>
      <ContactList>
        {CONTACTS.map((c) => <Contact key={c.text} $track={c.track}>{c.text}</Contact>)}
      </ContactList>
      <Actions>
        <ActionButton $bg="#ffc905" $fg="#000" $gap={19} $shift={4} $track={-0.6}>
          <Triangle />Back To Home
        </ActionButton>
        <ActionButton $bg="#009100" $fg="#fff" $gap={13} $shift={15} $track={-0.7}>
          <OkHand />I'm alright! Now
        </ActionButton>
      </Actions>
      <HomeIndicator />
    </Screen>
  );
}
